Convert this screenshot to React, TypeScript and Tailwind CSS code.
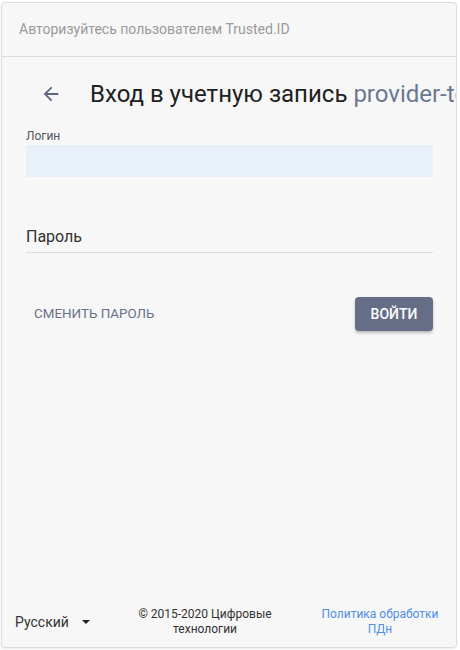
export default function App() {
  return (
    <div className="h-[650px] w-[460px] bg-white pl-px pt-[2px] font-['Roboto',sans-serif]">
      <div className="flex h-[646px] w-[456px] flex-col overflow-hidden rounded-[4px] border border-[#dedede] bg-[#f7f7f7] shadow-[0_1px_2px_rgba(0,0,0,0.08)]">
        <div className="flex h-[54px] shrink-0 items-center border-b border-[#dcdcdc] pl-[17px] text-[14px] text-[#9a9a9a]">
          Авторизуйтесь пользователем Trusted.ID
        </div>

        <div className="flex h-[72px] items-center whitespace-nowrap pl-[38px] pt-[2px]">
          <svg className="mr-[28px] h-[22px] w-[22px] shrink-0 text-[#5d6580]" viewBox="0 0 24 24" fill="currentColor">
            <path d="M20 11H7.83l5.59-5.59L12 4l-8 8 8 8 1.41-1.41L7.83 13H20v-2z" />
          </svg>
          <span className="text-[24px] text-[#212121]">
            Вход в учетную запись <span className="text-[#6b788f]">provider-test</span>
          </span>
        </div>

        <div className="px-[24px]">
          <div className="text-[12px] leading-[14px] text-[#555]">Логин</div>
          <div className="mt-[2px] h-[32px] w-[407px] bg-[#e8f0fa]" />

          <div className="mt-[50px] w-[407px] border-b border-[#dcdcdc] pb-[5px] text-[16px] leading-[20px] text-[#333]">
            Пароль
          </div>

          <div className="mt-[44px] flex w-[407px] items-center justify-between">
            <button className="px-[8px] text-[13.4px] text-[#68718a]">
              СМЕНИТЬ ПАРОЛЬ
            </button>
            <button className="h-[34px] w-[78px] rounded-[4px] bg-[#666e87] text-[14px] font-medium text-white shadow-[0_2px_3px_rgba(0,0,0,0.25)]">
              ВОЙТИ
            </button>
          </div>
        </div>

        <div className="mt-auto flex h-[50px] items-center text-[12px] leading-[15px]">
          <div className="flex w-[120px] items-center pl-[13px] text-[14px] text-[#333]">
            Русский
            <svg className="ml-[12px] h-[10px] w-[10px] text-[#222]" viewBox="0 0 10 10" fill="currentColor">
              <path d="M1 3h8L5 7z" />
            </svg>
          </div>
          <div className="w-[166px] text-center text-[#333]">
            © 2015-2020 Цифровые
            <br />
            технологии
          </div>
          <div className="flex-1 pl-[16px] text-center text-[#4f8fe6]">
            Политика обработки
            <br />
            ПДн
          </div>
        </div>
      </div>
    </div>
  );
}
